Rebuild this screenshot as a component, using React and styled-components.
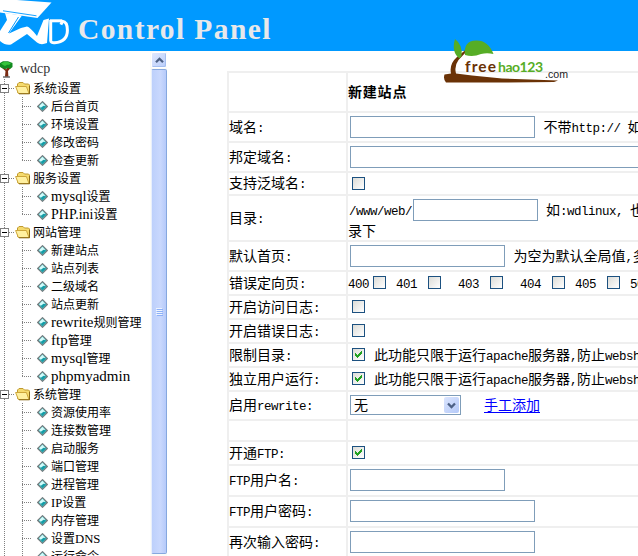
import React from "react";
import styled, { createGlobalStyle, css } from "styled-components";

const GlobalStyle = createGlobalStyle`
  * { box-sizing: border-box; }
  body { margin: 0; background: #fff; overflow: hidden; }
`;

const Page = styled.div`
  position: relative;
  width: 638px;
  height: 556px;
  overflow: hidden;
  display: flex;
  flex-direction: column;
  background: #fff;
  color: #000;
  font-family: "Noto Sans CJK SC", sans-serif;
`;

const Header = styled.header`
  flex: none;
  height: 51px;
  display: flex;
  background: #0099ff;
`;

const HeaderMark = styled.svg`
  flex: none;
  display: block;
  width: 78px;
  height: 51px;
`;

const HeaderTitle = styled.h1`
  margin: 0;
  padding-top: 13px;
  font: bold 29.5px/33px "Liberation Serif", serif;
  letter-spacing: 1.4px;
  color: #e8e8ea;
  white-space: nowrap;
`;

const Body = styled.div`
  flex: 1;
  min-height: 0;
  display: flex;
`;

const Sidebar = styled.nav`
  flex: none;
  width: 150px;
  overflow: hidden;
  padding-top: 8px;
`;

const dots = (dir) => css`repeating-linear-gradient(${dir}, #808080 0 1px, transparent 1px 2px)`;

const RootRow = styled.div`
  display: flex;
  align-items: center;
  height: 20px;
  gap: 6px;
  color: #333;
  svg { flex: none; }
`;

const RootLabel = styled.span`
  font: 14px/18px "Liberation Serif", serif;
`;

const Branch = styled.section`
  background: ${dots("180deg")} 4px 0 / 1px 100% no-repeat;
`;

const FolderRow = styled.div`
  display: flex;
  align-items: center;
  height: 18px;
  svg { flex: none; display: block; }
`;

const Stub = styled.i`
  flex: none;
  height: 1px;
  width: ${(p) => p.$w}px;
  background: ${dots("90deg")};
`;

const ItemRow = styled.div`
  display: flex;
  align-items: center;
  height: 18px;
  padding-left: 22px;
  background: ${dots("180deg")} 22px 0 / 1px ${(p) => (p.$last ? "9px" : "100%")} no-repeat;
  svg { flex: none; margin: 0 3px 0 5px; }
`;

const TreeLabel = styled.span`
  margin-left: ${(p) => p.$ml || 0}px;
  font-size: 12px;
  line-height: 18px;
  white-space: nowrap;
`;

const TreeLatin = styled.span`
  font-family: "Liberation Serif", serif;
  font-size: ${(p) => p.$size || 15}px;
  line-height: 1;
`;

const ScrollTrack = styled.div`
  flex: none;
  width: 17px;
  display: flex;
  flex-direction: column;
  padding: 1px 0 2px 1px;
  background: #fbfbf8;
`;

const ScrollButton = styled.div`
  flex: none;
  height: 16px;
  display: grid;
  place-items: center;
  margin-bottom: 1px;
  border: 1px solid #fff;
  border-radius: 2px;
  box-shadow: inset -1px -1px 0 #a5bff0;
  background: linear-gradient(135deg, #dfe8fe, #b9cdfa);
`;

const ScrollThumb = styled.div`
  flex: 1;
  display: grid;
  place-items: center;
  border: solid #86a8df;
  border-width: 1px 1px 1px 0;
  border-left: 1px solid #e8effc;
  border-radius: 2px;
  background: linear-gradient(90deg, #bdd0fb, #c9d8fd 60%, #b6cafa);
`;

const Main = styled.main`
  flex: 1;
  min-width: 0;
  overflow: hidden;
  padding: 20px 0 0 60px;
`;

const Form = styled.div`
  width: 460px;
  border-left: 2px solid #efefef;
`;

const Row = styled.div`
  display: grid;
  grid-template-columns: 117px 1fr;
  height: ${(p) => p.$h}px;
  border-top: 2px solid #efefef;
`;

const Label = styled.div`
  display: flex;
  align-items: center;
  padding-bottom: 2px;
  font-size: 14px;
  line-height: 18px;
  white-space: nowrap;
`;

const Cell = styled.div`
  border-left: 2px solid #efefef;
  display: flex;
  flex-direction: column;
  min-width: 0;
  justify-content: ${(p) => (p.$center ? "center" : "flex-start")};
`;

const Line = styled.div`
  display: flex;
  align-items: center;
  flex: none;
  height: ${(p) => p.$h || 28}px;
  padding-left: ${(p) => p.$pad || 0}px;
  white-space: nowrap;
`;

const Text = styled.span`
  flex: none;
  font-size: 14px;
  line-height: 18px;
  white-space: pre;
  margin-left: ${(p) => p.$ml || 0}px;
  padding-top: ${(p) => p.$drop || 0}px;
  padding-bottom: 2px;
`;

const Title = styled.strong`
  padding-bottom: 2px;
  font-size: 14px;
  line-height: 20px;
  letter-spacing: 0.8px;
`;

const Latin = styled.span`
  font-family: "Liberation Mono", monospace;
  font-size: 12.5px;
  letter-spacing: -0.5px;
  line-height: 1;
`;

const Input = styled.input.attrs({ type: "text" })`
  flex: none;
  width: ${(p) => p.$w}px;
  height: 22px;
  margin: 0 0 0 ${(p) => p.$ml || 0}px;
  padding: 0 3px;
  border: 1px solid #7f9db9;
  border-radius: 0;
  background: #fff;
  outline: none;
`;

const Box = styled.span`
  flex: none;
  width: 13px;
  height: 13px;
  margin-left: ${(p) => p.$ml || 0}px;
  border: 1px solid #1c5180;
  background: linear-gradient(135deg, #dcdcd7, #fff);
  svg { display: block; }
`;

const Select = styled.div`
  flex: none;
  width: 111px;
  height: 20px;
  display: flex;
  align-items: center;
  justify-content: space-between;
  padding: 0 1px 0 3px;
  border: 1px solid #7f9db9;
`;

const SelectArrow = styled.span`
  width: 15px;
  height: 16px;
  display: grid;
  place-items: center;
  border-radius: 2px;
  background: linear-gradient(135deg, #dbe5fe, #b4c9f8);
`;

const Link = styled.a`
  margin-left: 23px;
  padding-bottom: 2px;
  font-size: 14px;
  line-height: 18px;
  color: #0000ff;
  text-decoration: underline;
  text-decoration-thickness: 1px;
  text-underline-offset: 2px;
`;

const Watermark = styled.svg`
  position: absolute;
  left: 442px;
  top: 36px;
`;

const split = (s) => s.match(/[\x20-\x7e]+|[^\x20-\x7e]+/g) || [];
const isLatin = (s) => /^[\x20-\x7e]/.test(s);

const Mixed = ({ children }) =>
  split(children).map((s, i) => (isLatin(s) ? <Latin key={i}>{s}</Latin> : s));

const Check = ({ on, ml }) => (
  <Box $ml={ml}>
    {on && (
      <svg width="11" height="11" viewBox="0 0 11 11" shapeRendering="crispEdges">
        <path d="M2 4h1v1h1v1h1V5h1V4h1V3h1V2h1v3H8v1H7v1H6v1H5v1H4V8H3V7H2z" fill="#21a121" />
      </svg>
    )}
  </Box>
);

const Chevron = ({ up }) => (
  <svg width="9" height="7" viewBox="0 0 9 7">
    <path d={up ? "M1 5.2 4.5 1.8 8 5.2" : "M1 1.5 4.5 5 8 1.5"} fill="none" stroke="#4d6185" strokeWidth="2.3" />
  </svg>
);

const MinusIcon = () => (
  <svg width="9" height="9" viewBox="0 0 9 9" shapeRendering="crispEdges">
    <path d="M.5 .5h8v8h-8z" fill="#fff" stroke="#808080" />
    <path d="M2 4.5h5" stroke="#000" />
  </svg>
);

const FolderIcon = () => (
  <svg width="16" height="14" viewBox="0 0 16 14">
    <path d="M2.5 11V3L4 1.5h4L9.5 3h4l1 1v8.5h-11z" fill="#f5da6d" stroke="#c09a30" />
    <path d="M.6 5.5h10.800l2.600 7H3.400z" fill="#fff0a0" stroke="#cda63a" />
    <path d="M4 12.800h10.500V5" fill="none" stroke="#876716" />
  </svg>
);

const GemIcon = () => (
  <svg width="11" height="11" viewBox="0 0 11 11">
    <path d="M5.500 .7 10.300 5.500 5.500 10.300 .7 5.500z" fill="#48c4c8" stroke="#747c7e" strokeWidth="1.200" />
    <path d="M5.400 1.800 8 4.500 5 7.500 2 5.200z" fill="#d2fbfa" />
    <path d="M6.500 4.800 9 5.500 5.500 9 3.600 7z" fill="#159ca6" />
  </svg>
);

const TreeIcon = () => (
  <svg width="14" height="18" viewBox="0 0 14 18">
    <path d="M5 16.500 5.500 11 1 7h3l2 2.500L8 7h3.500L8 11l.4 5.500z" fill="#7a2b12" />
    <path d="M0 3 3 1.200h5L12.500 3v4L10 9 8 7.800 6 9 3 8.500 0 7z" fill="#128b20" />
    <path d="M1 3.500 4 2h4l3 1.500-2 1.200H7L5 6 3 5z" fill="#35c43b" />
    <path d="M3 17h7" stroke="#222" />
  </svg>
);

const BrandMark = () => (
  <HeaderMark viewBox="0 0 78 51">
    <path d="M0 0H17L51.500 2.500 37.500 18 0 12.500z" fill="#fff" />
    <path d="M3 10.800 36.500 15.800" stroke="#0099ff" strokeWidth=".9" />
    <path d="M5 13 22 15.500 9 33.500 21 28 27 26.500Q30 27 37 36L43.500 20 49 18.500 47 43Q41 45.500 37 42.500L27 34 11 44.500Q6 46 0 41V31L7 20z" fill="#fff" />
    <path d="M18.500 17 8.500 33M22 17.500 13 29" stroke="#0099ff" strokeWidth="1" />
    <path d="M50.700 20v20.500q0 2.500 4 2.200 12.700-1 12.700-12.500 0-8.500-5-9l-1.500 3.500" fill="none" stroke="#fff" strokeWidth="3" strokeLinejoin="round" />
    <path d="M50 20.800H62" stroke="#fff" strokeWidth="3" />
  </HeaderMark>
);

const tree = [
  ["系统设置", ["后台首页", "环境设置", "修改密码", "检查更新"]],
  ["服务设置", ["mysql设置", "PHP.ini设置"]],
  ["网站管理", ["新建站点", "站点列表", "二级域名", "站点更新", "rewrite规则管理", "ftp管理", "mysql管理", "phpmyadmin"]],
  ["系统管理", ["资源使用率", "连接数管理", "启动服务", "端口管理", "进程管理", "IP设置", "内存管理", "设置DNS", "运行命令"]],
];

const latinSize = { IP: 12.5, DNS: 12.7, "PHP.ini": 14, mysql: 14.5 };

const Tree = () => (
  <Sidebar>
    <RootRow>
      <TreeIcon />
      <RootLabel>wdcp</RootLabel>
    </RootRow>
    {tree.map(([name, items], b) => (
      <Branch key={name}>
        <FolderRow>
          <MinusIcon />
          <Stub $w={6} />
          <FolderIcon />
          <TreeLabel $ml={2}>{name}</TreeLabel>
        </FolderRow>
        {items.map((item, i) => (
          <ItemRow key={item} $last={b < tree.length - 1 && i === items.length - 1}>
            <Stub $w={10} />
            <GemIcon />
            <TreeLabel>
              {split(item).map((s, k) =>
                isLatin(s) ? <TreeLatin key={k} $size={latinSize[s]}>{s}</TreeLatin> : s
              )}
            </TreeLabel>
          </ItemRow>
        ))}
      </Branch>
    ))}
  </Sidebar>
);

const Field = ({ h, label, center, children }) => (
  <Row $h={h}>
    <Label><span><Mixed>{label}</Mixed></span></Label>
    <Cell $center={center}>{children}</Cell>
  </Row>
);

const CheckField = ({ h = 24, label, on, note }) => (
  <Field h={h} label={label}>
    <Line $h={21} $pad={4}>
      <Check on={on} />
      {note && <Text $ml={9} $drop={2}><Mixed>{note}</Mixed></Text>}
    </Line>
  </Field>
);

const InputField = ({ h = 30, label, w, note }) => (
  <Field h={h} label={label}>
    <Line $pad={2}>
      <Input $w={w} />
      {note && <Text $ml={8.5}><Mixed>{note}</Mixed></Text>}
    </Line>
  </Field>
);

const codes = [
  ["400", 0, 4],
  ["401", 10, 11],
  ["403", 17, 11],
  ["404", 17, 11],
  ["405", 10, 11],
  ["500", 10, 11],
];

const apacheNote = "此功能只限于运行apache服务器,防止webshell";

export default function App() {
  return (
    <Page>
      <GlobalStyle />
      <Header>
        <BrandMark />
        <HeaderTitle>Control Panel</HeaderTitle>
      </Header>
      <Body>
        <Tree />
        <ScrollTrack>
          <ScrollButton><Chevron up /></ScrollButton>
          <ScrollThumb>
            <svg width="7" height="8" viewBox="0 0 7 8" shapeRendering="crispEdges">
              <path d="M0 .5h6M0 2.500h6M0 4.500h6M0 6.500h6" stroke="#eef4fe" />
              <path d="M1 1.500h6M1 3.500h6M1 5.500h6M1 7.500h6" stroke="#8cb0f8" />
            </svg>
          </ScrollThumb>
        </ScrollTrack>
        <Main>
          <Form>
            <Field h={40} label="" center><Title>新建站点</Title></Field>
            <InputField label="域名:" w={185} note="不带http:// 如:" />
            <InputField label="邦定域名:" w={320} />
            <CheckField h={23} label="支持泛域名:" />
            <Field h={46} label="目录:">
              <Line>
                <Text $ml={1}><Mixed>/www/web/</Mixed></Text>
                <Input $w={125} $ml={1} />
                <Text $ml={8}><Mixed>如:wdlinux, 也可</Mixed></Text>
              </Line>
              <Line $h={14}><Text>录下</Text></Line>
            </Field>
            <InputField label="默认首页:" w={155} note="为空为默认全局值,多个" />
            <Field h={24} label="错误定向页:">
              <Line $h={21}>
                {codes.map(([code, before, gap]) => (
                  <React.Fragment key={code}>
                    <Text $ml={before} $drop={2}><Mixed>{code}</Mixed></Text>
                    <Check ml={gap} />
                  </React.Fragment>
                ))}
              </Line>
            </Field>
            <CheckField label="开启访问日志:" />
            <CheckField label="开启错误日志:" />
            <CheckField label="限制目录:" on note={apacheNote} />
            <CheckField label="独立用户运行:" on note={apacheNote} />
            <Field h={29} label="启用rewrite:">
              <Line $h={26} $pad={2}>
                <Select>
                  <Text>无</Text>
                  <SelectArrow><Chevron /></SelectArrow>
                </Select>
                <Link>手工添加</Link>
              </Line>
            </Field>
            <Row $h={21}><Label /><Cell /></Row>
            <CheckField label="开通FTP:" on />
            <InputField h={31} label="FTP用户名:" w={155} />
            <InputField h={31} label="FTP用户密码:" w={185} />
            <InputField h={31} label="再次输入密码:" w={185} />
          </Form>
        </Main>
      </Body>
      <Watermark width="128" height="48" viewBox="0 0 128 48">
        <path d="M2.500 38.500 9 37.500Q7 28 15 21L24 13.500 25 15 16.500 24Q12 30 14 37.500L30 39.500 60 42.500 116 44.500 112 46 60 46.500H4Q1 43 2.500 38.500z" fill="#6a3206" />
        <path d="M13 3Q21 9 19.500 20L17.500 22.500Q9 16 13 3z" fill="#56ad26" />
        <path d="M23 19Q21 5 34 4.500 46 4 51.500 18 45 16.500 39 18 31 21.500 23 19z" fill="#56ad26" />
        <text x="23" y="36" textLength="31" fontFamily="Lato, sans-serif" fontWeight="700" fontSize="15.500" fill="#6a3206">free</text>
        <text x="56" y="36" textLength="45" fontFamily="Lato, sans-serif" fontWeight="700" fontSize="14" fill="#56ad26">hao123</text>
        <text x="103" y="42" textLength="23" lengthAdjust="spacingAndGlyphs" fontFamily="Liberation Sans, sans-serif" fontSize="10.500" fill="#222">.com</text>
      </Watermark>
    </Page>
  );
}
